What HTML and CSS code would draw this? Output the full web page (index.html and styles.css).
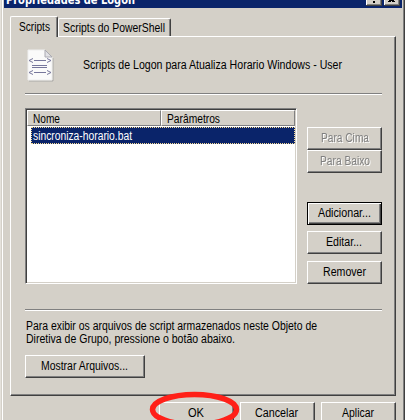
FILE: index.html
```html
<!DOCTYPE html>
<html lang="pt-BR">
<head>
<meta charset="utf-8">
<title>Propriedades de Logon</title>
<link rel="stylesheet" href="styles.css">
</head>
<body>
<main class="dialog">
  <header class="titlebar">
    <svg class="title" width="300" height="8"><text x="2" y="3.500" textLength="129" lengthAdjust="spacingAndGlyphs">Propriedades de Logon</text></svg>
    <div class="caption-buttons">
      <button class="caption" aria-label="Ajuda"><svg width="12" height="6"><path d="M7 1h2v2H7z"/></svg></button>
      <button class="caption" aria-label="Fechar"><svg width="12" height="6"><path d="M5 0h5v1H5zM4 1h3v1H4zM8 1h3v1H8z"/></svg></button>
    </div>
  </header>
  <nav class="tabs">
    <button class="tab active"><svg width="46" height="20"><text x="8" y="14" textLength="31" lengthAdjust="spacingAndGlyphs">Scripts</text></svg></button>
    <button class="tab"><svg width="111" height="17"><text x="4" y="13" textLength="102" lengthAdjust="spacingAndGlyphs">Scripts do PowerShell</text></svg></button>
  </nav>
  <section class="panel">
    <div class="heading">
      <svg class="script-icon" width="28" height="34" viewBox="0 0 28 34">
        <path d="M2 33h24V10" fill="none" stroke="#aaa9a7"/>
        <path d="M1 2h17l7 7v23H1z" fill="#fafafa" stroke="#eeeeee"/>
        <path d="M18 2v7h7z" fill="#e1e1e5" stroke="#aaaab2"/>
        <path d="M6 10.500l-4 2 4 2M20 10.500l4 2-4 2M7 12.500h12M5 17.500h15M5 19.500h15M6 22.500l-4 2 4 2M20 22.500l4 2-4 2M7 24.500h12" fill="none" stroke="#77779c"/>
      </svg>
      <svg class="heading-text" width="270" height="20"><text x="0" y="15" textLength="259" lengthAdjust="spacingAndGlyphs">Scripts de Logon para Atualiza Horario Windows - User</text></svg>
    </div>
    <div class="rule"></div>
    <div class="content">
      <div class="list">
        <div class="columns">
          <div class="column name"><svg width="120" height="14"><text x="5" y="12" textLength="27" lengthAdjust="spacingAndGlyphs">Nome</text></svg></div>
          <div class="column params"><svg width="120" height="14"><text x="5" y="12" textLength="53" lengthAdjust="spacingAndGlyphs">Parâmetros</text></svg></div>
        </div>
        <div class="row"><svg width="250" height="15"><text x="1" y="12" textLength="99" lengthAdjust="spacingAndGlyphs">sincroniza-horario.bat</text></svg></div>
      </div>
      <div class="actions">
        <button class="button disabled"><svg width="71" height="19"><text x="12" y="13" textLength="48" lengthAdjust="spacingAndGlyphs">Para Cima</text></svg></button>
        <button class="button disabled"><svg width="71" height="19"><text x="11" y="13" textLength="50" lengthAdjust="spacingAndGlyphs">Para Baixo</text></svg></button>
        <button class="button default"><svg width="71" height="19"><text x="9" y="13" textLength="53" lengthAdjust="spacingAndGlyphs">Adicionar...</text></svg></button>
        <button class="button edit"><svg width="71" height="19"><text x="17" y="13" textLength="36" lengthAdjust="spacingAndGlyphs">Editar...</text></svg></button>
        <button class="button remove"><svg width="71" height="19"><text x="14" y="13" textLength="43" lengthAdjust="spacingAndGlyphs">Remover</text></svg></button>
      </div>
    </div>
    <div class="rule lower"></div>
    <svg class="note" width="310" height="30"><text x="1" y="11" textLength="291" lengthAdjust="spacingAndGlyphs">Para exibir os arquivos de script armazenados neste Objeto de</text><text x="1" y="24" textLength="209" lengthAdjust="spacingAndGlyphs">Diretiva de Grupo, pressione o botão abaixo.</text></svg>
    <button class="button files"><svg width="115" height="19"><text x="14" y="13" textLength="87" lengthAdjust="spacingAndGlyphs">Mostrar Arquivos...</text></svg></button>
  </section>
  <footer class="footer">
    <button class="button"><svg width="71" height="19"><text x="27" y="13" textLength="16" lengthAdjust="spacingAndGlyphs">OK</text></svg></button>
    <button class="button"><svg width="71" height="19"><text x="13" y="13" textLength="43" lengthAdjust="spacingAndGlyphs">Cancelar</text></svg></button>
    <button class="button"><svg width="71" height="19"><text x="19" y="13" textLength="32" lengthAdjust="spacingAndGlyphs">Aplicar</text></svg></button>
  </footer>
  <svg class="marker" width="92" height="40"><ellipse cx="45.500" cy="18.500" rx="42" ry="15"/></svg>
</main>
</body>
</html>
```
FILE: styles.css
```css
* { box-sizing: border-box; }
body { margin: 0; background: #fff; overflow: hidden; font-family: "Liberation Sans", Arial, sans-serif; font-size: 12px; }
svg { display: block; flex: none; overflow: visible; }
text { fill: #000; }
button { appearance: none; margin: 0; padding: 0; border: 0; background: #d4d0c8; font: inherit; }
.dialog { position: relative; width: 405px; height: 420px; overflow: hidden; border-left: 1px solid #e5e2dc; border-right: 1px solid #404040; box-shadow: inset 1px 0 #d4d0c8, inset 2px 0 #fff, inset -1px 0 #808080; padding: 0 2px 0 3px; background: #d4d0c8; }
.titlebar { display: flex; justify-content: space-between; height: 8px; background: #0a246a; padding-right: 2px; }
.title text { fill: #fff; font: bold 12px "DejaVu Sans", sans-serif; }
.caption-buttons { display: flex; gap: 2px; }
.caption { width: 16px; height: 6px; border-right: 1px solid #404040; border-bottom: 1px solid #404040; box-shadow: inset 1px 0 #fff, inset -1px -1px #808080; }
.tabs { display: flex; align-items: flex-end; height: 28px; padding-left: 6px; }
.tab { width: 113px; height: 18px; border: 1px solid #fff; border-bottom: 0; border-right-color: #404040; box-shadow: inset -1px 0 #808080; border-radius: 2px 2px 0 0; }
.tab.active { position: relative; width: 48px; height: 21px; margin-bottom: -1px; }
.panel { margin-left: 6px; width: 386px; height: 360px; border: 1px solid #fff; border-right-color: #404040; border-bottom-color: #404040; box-shadow: inset -1px -1px #808080; padding: 10px 14px 0; }
.heading { display: flex; height: 46px; }
.script-icon { margin: 1px 0 0 2px; }
.heading-text { margin: 7px 0 0 28px; }
.rule { width: 357px; height: 2px; background: #808080; border-bottom: 1px solid #fff; }
.content { display: flex; gap: 10px; margin-top: 13px; }
.list { width: 272px; height: 176px; background: #fff; border: 1px solid #808080; border-right-color: #fff; border-bottom-color: #fff; box-shadow: inset 1px 1px #404040, inset -1px -1px #d4d0c8; padding: 1px; }
.columns { display: flex; height: 16px; }
.column { height: 16px; background: #d4d0c8; border: 1px solid #fff; border-right-color: #808080; border-bottom-color: #808080; }
.name { width: 134px; }
.params { width: 134px; }
.row { margin: 1px 0 0 4px; height: 17px; background: #0a246a; border: 1px dotted #f5db95; }
.row text { fill: #fff; }
.actions { display: flex; flex-direction: column; padding-top: 19px; width: 75px; }
.button { width: 75px; height: 23px; border: 1px solid #fff; border-right-color: #404040; border-bottom-color: #404040; box-shadow: inset -1px -1px #808080; padding: 1px; overflow: hidden; }
.disabled text { fill: #808080; }
.disabled svg { filter: drop-shadow(1px 1px 0 #fff); }
.default { margin-top: 29px; border-color: #000; box-shadow: inset 1px 1px #fff, inset -1px -1px #404040, inset -2px -2px #808080; }
.edit { margin-top: 6px; }
.remove { margin-top: 7px; }
.lower { margin-top: 25px; }
.note { margin-top: 8px; }
.files { display: block; width: 120px; margin-top: 6px; }
.footer { display: flex; gap: 6px; margin: 6px 0 0 155px; }
.marker { position: absolute; left: 148px; top: 391px; fill: none; stroke: #ff2018; stroke-width: 5.5px; }
```
